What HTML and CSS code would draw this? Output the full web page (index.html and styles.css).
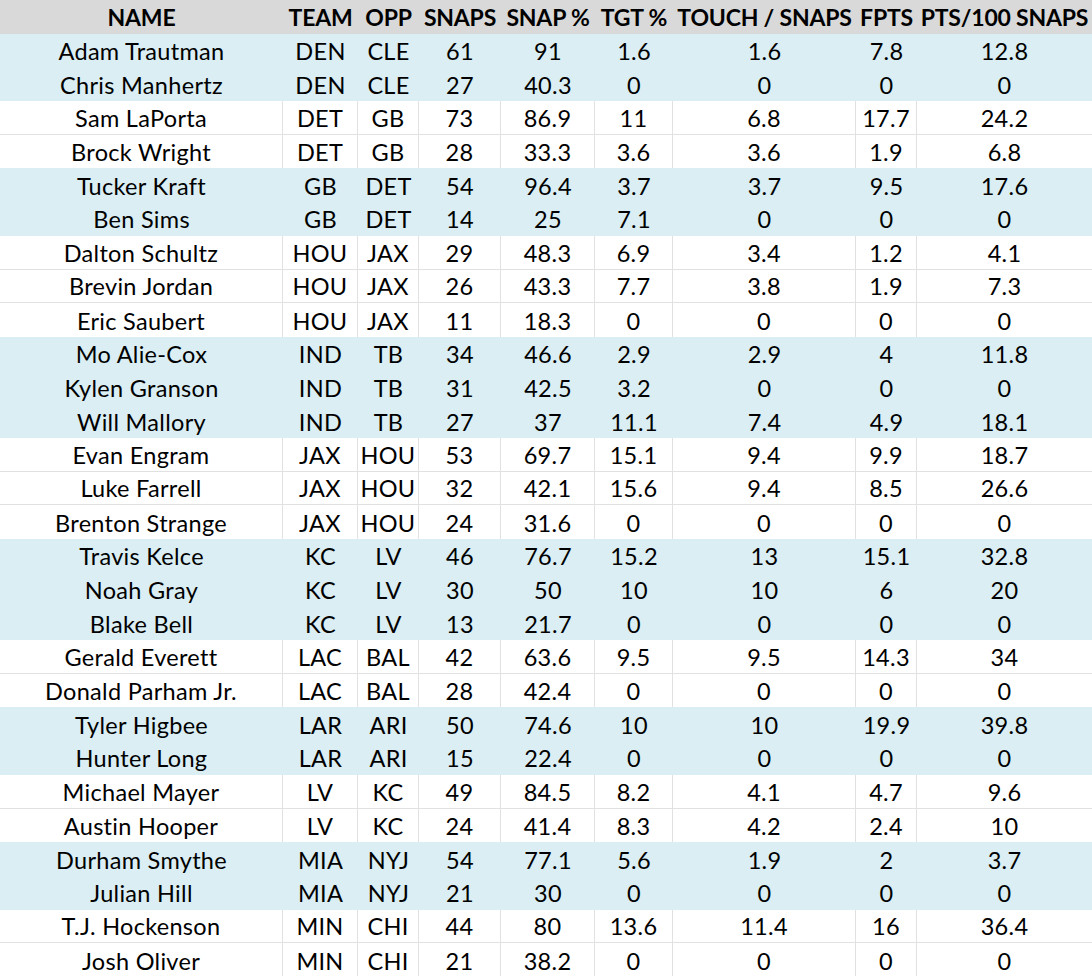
FILE: index.html
```html
<!DOCTYPE html>
<html>
<head>
<meta charset="utf-8">
<link rel="stylesheet" href="styles.css">
</head>
<body>
<div class="sheet">
  <div class="row head"><div>NAME</div><div>TEAM</div><div>OPP</div><div>SNAPS</div><div>SNAP %</div><div>TGT %</div><div>TOUCH / SNAPS</div><div>FPTS</div><div>PTS/100 SNAPS</div></div>
  <div class="row blue"><div>Adam Trautman</div><div>DEN</div><div>CLE</div><div>61</div><div>91</div><div>1.6</div><div>1.6</div><div>7.8</div><div>12.8</div></div>
  <div class="row blue"><div>Chris Manhertz</div><div>DEN</div><div>CLE</div><div>27</div><div>40.3</div><div>0</div><div>0</div><div>0</div><div>0</div></div>
  <div class="row white sep"><div>Sam LaPorta</div><div>DET</div><div>GB</div><div>73</div><div>86.9</div><div>11</div><div>6.8</div><div>17.7</div><div>24.2</div></div>
  <div class="row white"><div>Brock Wright</div><div>DET</div><div>GB</div><div>28</div><div>33.3</div><div>3.6</div><div>3.6</div><div>1.9</div><div>6.8</div></div>
  <div class="row blue"><div>Tucker Kraft</div><div>GB</div><div>DET</div><div>54</div><div>96.4</div><div>3.7</div><div>3.7</div><div>9.5</div><div>17.6</div></div>
  <div class="row blue"><div>Ben Sims</div><div>GB</div><div>DET</div><div>14</div><div>25</div><div>7.1</div><div>0</div><div>0</div><div>0</div></div>
  <div class="row white sep"><div>Dalton Schultz</div><div>HOU</div><div>JAX</div><div>29</div><div>48.3</div><div>6.9</div><div>3.4</div><div>1.2</div><div>4.1</div></div>
  <div class="row white sep"><div>Brevin Jordan</div><div>HOU</div><div>JAX</div><div>26</div><div>43.3</div><div>7.7</div><div>3.8</div><div>1.9</div><div>7.3</div></div>
  <div class="row white"><div>Eric Saubert</div><div>HOU</div><div>JAX</div><div>11</div><div>18.3</div><div>0</div><div>0</div><div>0</div><div>0</div></div>
  <div class="row blue"><div>Mo Alie-Cox</div><div>IND</div><div>TB</div><div>34</div><div>46.6</div><div>2.9</div><div>2.9</div><div>4</div><div>11.8</div></div>
  <div class="row blue"><div>Kylen Granson</div><div>IND</div><div>TB</div><div>31</div><div>42.5</div><div>3.2</div><div>0</div><div>0</div><div>0</div></div>
  <div class="row blue"><div>Will Mallory</div><div>IND</div><div>TB</div><div>27</div><div>37</div><div>11.1</div><div>7.4</div><div>4.9</div><div>18.1</div></div>
  <div class="row white sep"><div>Evan Engram</div><div>JAX</div><div>HOU</div><div>53</div><div>69.7</div><div>15.1</div><div>9.4</div><div>9.9</div><div>18.7</div></div>
  <div class="row white sep"><div>Luke Farrell</div><div>JAX</div><div>HOU</div><div>32</div><div>42.1</div><div>15.6</div><div>9.4</div><div>8.5</div><div>26.6</div></div>
  <div class="row white"><div>Brenton Strange</div><div>JAX</div><div>HOU</div><div>24</div><div>31.6</div><div>0</div><div>0</div><div>0</div><div>0</div></div>
  <div class="row blue"><div>Travis Kelce</div><div>KC</div><div>LV</div><div>46</div><div>76.7</div><div>15.2</div><div>13</div><div>15.1</div><div>32.8</div></div>
  <div class="row blue"><div>Noah Gray</div><div>KC</div><div>LV</div><div>30</div><div>50</div><div>10</div><div>10</div><div>6</div><div>20</div></div>
  <div class="row blue"><div>Blake Bell</div><div>KC</div><div>LV</div><div>13</div><div>21.7</div><div>0</div><div>0</div><div>0</div><div>0</div></div>
  <div class="row white sep"><div>Gerald Everett</div><div>LAC</div><div>BAL</div><div>42</div><div>63.6</div><div>9.5</div><div>9.5</div><div>14.3</div><div>34</div></div>
  <div class="row white"><div>Donald Parham Jr.</div><div>LAC</div><div>BAL</div><div>28</div><div>42.4</div><div>0</div><div>0</div><div>0</div><div>0</div></div>
  <div class="row blue"><div>Tyler Higbee</div><div>LAR</div><div>ARI</div><div>50</div><div>74.6</div><div>10</div><div>10</div><div>19.9</div><div>39.8</div></div>
  <div class="row blue"><div>Hunter Long</div><div>LAR</div><div>ARI</div><div>15</div><div>22.4</div><div>0</div><div>0</div><div>0</div><div>0</div></div>
  <div class="row white sep"><div>Michael Mayer</div><div>LV</div><div>KC</div><div>49</div><div>84.5</div><div>8.2</div><div>4.1</div><div>4.7</div><div>9.6</div></div>
  <div class="row white"><div>Austin Hooper</div><div>LV</div><div>KC</div><div>24</div><div>41.4</div><div>8.3</div><div>4.2</div><div>2.4</div><div>10</div></div>
  <div class="row blue"><div>Durham Smythe</div><div>MIA</div><div>NYJ</div><div>54</div><div>77.1</div><div>5.6</div><div>1.9</div><div>2</div><div>3.7</div></div>
  <div class="row blue"><div>Julian Hill</div><div>MIA</div><div>NYJ</div><div>21</div><div>30</div><div>0</div><div>0</div><div>0</div><div>0</div></div>
  <div class="row white sep"><div>T.J. Hockenson</div><div>MIN</div><div>CHI</div><div>44</div><div>80</div><div>13.6</div><div>11.4</div><div>16</div><div>36.4</div></div>
  <div class="row white"><div>Josh Oliver</div><div>MIN</div><div>CHI</div><div>21</div><div>38.2</div><div>0</div><div>0</div><div>0</div><div>0</div></div>
</div>
</body>
</html>
```
FILE: styles.css
```css
html, body {
  margin: 0;
  padding: 0;
  background: #ffffff;
}
.sheet {
  width: 1092px;
  font-family: Lato, "Liberation Sans", sans-serif;
  font-size: 23.5px;
  letter-spacing: 0.3px;
  color: #000000;
}
.row {
  display: grid;
  grid-template-columns: 283px 75px 61px 82px 94px 78px 183px 61px 175px;
  height: 33.7px;
}
.row > div {
  display: flex;
  align-items: center;
  justify-content: center;
  white-space: nowrap;
  box-sizing: border-box;
  padding-top: 1px;
}
.head {
  background: #d9d9d9;
  font-weight: bold;
  font-size: 23px;
  letter-spacing: -0.2px;
}
.blue {
  background: #daeef3;
}
.white {
  background: #ffffff;
}
.white > div {
  border-right: 1px solid #e1e1e1;
}
.white > div:last-child {
  border-right: none;
}
.white.sep > div {
  border-bottom: 1px solid #e1e1e1;
}
```
